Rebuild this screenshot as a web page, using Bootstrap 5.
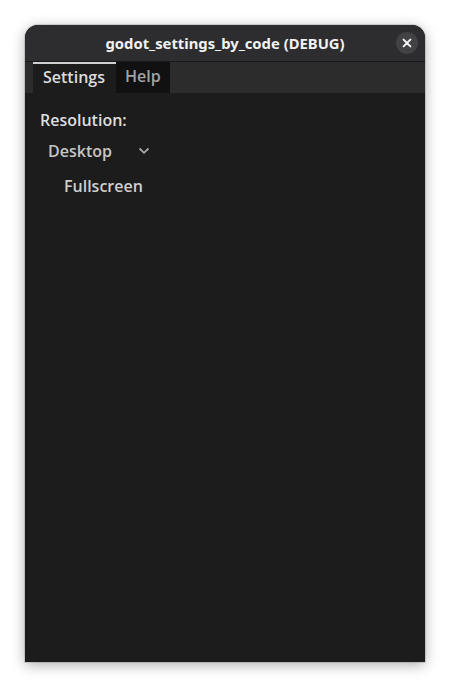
<!DOCTYPE html>
<html lang="en">
<head>
<meta charset="utf-8">
<title>godot_settings_by_code (DEBUG)</title>
<link href="https://cdn.jsdelivr.net/npm/bootstrap@5.3.0/dist/css/bootstrap.min.css" rel="stylesheet">
<style>
html, body { height: 687px; overflow: hidden; background: #fff; }
.stage { padding: 25px 25px 25px 25px; height: 687px; }
.gwin { height: 637px; background: #1c1c1c; border-radius: 13px 13px 0 0; box-shadow: 0 3px 14px rgba(0,0,0,.32), 0 0 0 1px rgba(0,0,0,.12); overflow: hidden; }
.gtitle { height: 37px; background: #2d2d2f; border-bottom: 1px solid #19191a; position: relative; font: 700 14.8px "Noto Sans", sans-serif; color: #f2f2f2; }
.gclose { position: absolute; right: 7px; top: 7px; width: 22px; height: 22px; border-radius: 50%; background: #424245; }
.gtabs { height: 31px; background: #2c2c2c; padding-left: 8px; font: 600 16px "Open Sans", sans-serif; }
.gtab { height: 31px; padding: 0 10px; line-height: 29px; }
.gtab-on { width: 83px; background: #1c1c1c; border-top: 2px solid #d0d0d0; color: #dcdcdc; line-height: 27px; }
.gtab-off { width: 54px; background: #111; color: #a3a3a3; padding-left: 9px; }
.gbody { padding: 16px 15px 0; font: 600 16px "Open Sans", sans-serif; color: #dedede; }
.glabel { line-height: 22px; }
.gselect { width: 120px; height: 31px; padding-left: 8px; margin-top: 4px; color: #c6c6c6; }
.gcheck { padding-left: 24px; margin-top: 9px; line-height: 22px; color: #cfcfcf; }
.gchev { margin-right: 10px; }
</style>
</head>
<body class="m-0">
<div class="stage">
  <div class="gwin d-flex flex-column">
    <div class="gtitle d-flex align-items-center justify-content-center flex-shrink-0">
      <span>godot_settings_by_code (DEBUG)</span>
      <div class="gclose d-flex align-items-center justify-content-center">
        <svg width="10" height="10" viewBox="0 0 10 10"><path d="M1.6 1.6 8.4 8.4M8.4 1.6 1.6 8.4" stroke="#f4f4f4" stroke-width="2" stroke-linecap="round" fill="none"/></svg>
      </div>
    </div>
    <div class="gtabs d-flex flex-shrink-0">
      <div class="gtab gtab-on">Settings</div>
      <div class="gtab gtab-off">Help</div>
    </div>
    <div class="gbody flex-grow-1">
      <div class="glabel">Resolution:</div>
      <div class="gselect d-flex align-items-center justify-content-between">
        <span>Desktop</span>
        <svg class="gchev" width="12" height="8" viewBox="0 0 12 8"><path d="M1.5 1.5 6 5.8 10.5 1.5" stroke="#a8a8a8" stroke-width="1.8" fill="none"/></svg>
      </div>
      <div class="gcheck">Fullscreen</div>
    </div>
  </div>
</div>
<script src="https://cdn.jsdelivr.net/npm/bootstrap@5.3.0/dist/js/bootstrap.bundle.min.js"></script>
</body>
</html>
